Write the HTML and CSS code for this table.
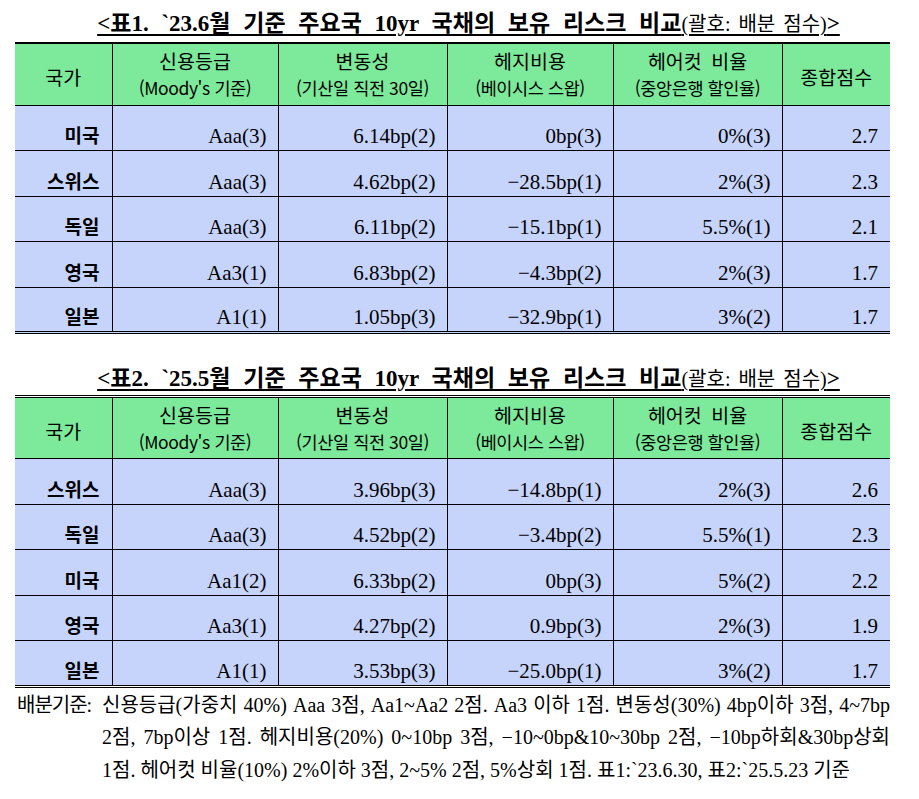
FILE: index.html
```html
<!DOCTYPE html>
<html lang="ko">
<head>
<meta charset="utf-8">
<link rel="stylesheet" href="styles.css">
</head>
<body>
<div class="page">
  <h2 class="title t1"><span class="u"><b>&lt;표1. `23.6월 기준 주요국 10yr 국채의 보유 리스크 비교</b><span class="paren">(괄호: 배분 점수)</span><b>&gt;</b></span></h2>
  <table class="risk first">
    <colgroup><col class="c1"><col class="c2"><col class="c3"><col class="c4"><col class="c5"><col class="c6"></colgroup>
    <thead>
      <tr>
        <th><span class="main">국가</span></th>
        <th><span class="main">신용등급</span><span class="sub">(Moody's 기준)</span></th>
        <th><span class="main">변동성</span><span class="sub">(기산일 직전 30일)</span></th>
        <th><span class="main">헤지비용</span><span class="sub">(베이시스 스왑)</span></th>
        <th><span class="main">헤어컷 비율</span><span class="sub">(중앙은행 할인율)</span></th>
        <th><span class="main">종합점수</span></th>
      </tr>
    </thead>
    <tbody>
      <tr><td class="ctry">미국</td><td>Aaa(3)</td><td>6.14bp(2)</td><td>0bp(3)</td><td>0%(3)</td><td class="score">2.7</td></tr>
      <tr><td class="ctry">스위스</td><td>Aaa(3)</td><td>4.62bp(2)</td><td>−28.5bp(1)</td><td>2%(3)</td><td class="score">2.3</td></tr>
      <tr><td class="ctry">독일</td><td>Aaa(3)</td><td>6.11bp(2)</td><td>−15.1bp(1)</td><td>5.5%(1)</td><td class="score">2.1</td></tr>
      <tr><td class="ctry">영국</td><td>Aa3(1)</td><td>6.83bp(2)</td><td>−4.3bp(2)</td><td>2%(3)</td><td class="score">1.7</td></tr>
      <tr><td class="ctry">일본</td><td>A1(1)</td><td>1.05bp(3)</td><td>−32.9bp(1)</td><td>3%(2)</td><td class="score">1.7</td></tr>
    </tbody>
  </table>

  <h2 class="title t2"><span class="u"><b>&lt;표2. `25.5월 기준 주요국 10yr 국채의 보유 리스크 비교</b><span class="paren">(괄호: 배분 점수)</span><b>&gt;</b></span></h2>
  <table class="risk second">
    <colgroup><col class="c1"><col class="c2"><col class="c3"><col class="c4"><col class="c5"><col class="c6"></colgroup>
    <thead>
      <tr>
        <th><span class="main">국가</span></th>
        <th><span class="main">신용등급</span><span class="sub">(Moody's 기준)</span></th>
        <th><span class="main">변동성</span><span class="sub">(기산일 직전 30일)</span></th>
        <th><span class="main">헤지비용</span><span class="sub">(베이시스 스왑)</span></th>
        <th><span class="main">헤어컷 비율</span><span class="sub">(중앙은행 할인율)</span></th>
        <th><span class="main">종합점수</span></th>
      </tr>
    </thead>
    <tbody>
      <tr><td class="ctry">스위스</td><td>Aaa(3)</td><td>3.96bp(3)</td><td>−14.8bp(1)</td><td>2%(3)</td><td class="score">2.6</td></tr>
      <tr><td class="ctry">독일</td><td>Aaa(3)</td><td>4.52bp(2)</td><td>−3.4bp(2)</td><td>5.5%(1)</td><td class="score">2.3</td></tr>
      <tr><td class="ctry">미국</td><td>Aa1(2)</td><td>6.33bp(2)</td><td>0bp(3)</td><td>5%(2)</td><td class="score">2.2</td></tr>
      <tr><td class="ctry">영국</td><td>Aa3(1)</td><td>4.27bp(2)</td><td>0.9bp(3)</td><td>2%(3)</td><td class="score">1.9</td></tr>
      <tr><td class="ctry">일본</td><td>A1(1)</td><td>3.53bp(3)</td><td>−25.0bp(1)</td><td>3%(2)</td><td class="score">1.7</td></tr>
    </tbody>
  </table>

  <div class="note">
    <div class="label">배분기준:</div>
    <div class="lines">
      <div class="line just">신용등급(가중치 40%) Aaa 3점, Aa1~Aa2 2점. Aa3 이하 1점. 변동성(30%) 4bp이하 3점, 4~7bp</div>
      <div class="line just">2점, 7bp이상 1점. 헤지비용(20%) 0~10bp 3점, −10~0bp&amp;10~30bp 2점, −10bp하회&amp;30bp상회</div>
      <div class="line">1점. 헤어컷 비율(10%) 2%이하 3점, 2~5% 2점, 5%상회 1점. 표1:`23.6.30, 표2:`25.5.23 기준</div>
    </div>
  </div>
</div>
</body>
</html>
```

FILE: styles.css
```css
* { box-sizing: border-box; }
html, body { margin: 0; padding: 0; background: #ffffff; }
body { font-family: "Liberation Serif", "Noto Sans CJK KR", serif; color: #000; }

.page { width: 919px; padding: 0 0 0 15px; }

.title {
  margin: 0;
  font-size: 23px;
  line-height: 28px;
  font-weight: normal;
  text-align: center;
  width: 875px;
  padding-left: 32px;
  word-spacing: 7px;
  white-space: nowrap;
}
.title b { font-weight: bold; }
.title .u {
  text-decoration: underline;
  text-decoration-thickness: 2px;
  text-underline-offset: 3px;
}
.title .paren { font-size: 20px; word-spacing: 3px; }
.t1 { padding-top: 10px; height: 42px; }
.t2 { margin-top: 28px; height: 33px; padding-top: 3px; }

.risk {
  border-collapse: collapse;
  table-layout: fixed;
  width: 875px;
}
.risk col.c1 { width: 97px; }
.risk col.c2 { width: 166px; }
.risk col.c3 { width: 169px; }
.risk col.c4 { width: 166px; }
.risk col.c5 { width: 169px; }
.risk col.c6 { width: 108px; }

.risk.first { border-top: 2px solid #000; }
.risk.second { border-top: 3px double #000; }
.risk { border-bottom: 3px double #000; }

.risk th {
  background: #7de99a;
  font-family: "Noto Sans CJK KR", "Noto Sans", sans-serif;
  font-weight: normal;
  height: 62px;
  padding: 0;
  border-left: 1px solid #000;
  border-bottom: 1px solid #000;
  text-align: center;
  vertical-align: middle;
}
.risk th:first-child { border-left: none; }
.risk th .main { display: block; font-size: 19.5px; line-height: 24px; word-spacing: 4px; }
.risk th .sub { display: block; font-size: 17.5px; line-height: 24px; margin-top: 3px; letter-spacing: -0.4px; }
.risk th .main:only-child { padding-top: 5px; }

.risk td {
  background: #c6d4fc;
  height: 45.5px;
  padding: 0 11px 2px 0;
  border-left: 1px solid #000;
  border-top: 1px solid #000;
  text-align: right;
  vertical-align: bottom;
  font-size: 21px;
  line-height: 24px;
  white-space: nowrap;
}
.risk tbody tr:first-child td { border-top: none; }
.risk td:first-child { border-left: none; }
.risk td.ctry {
  font-family: "Noto Sans CJK KR", sans-serif;
  font-weight: bold;
  font-size: 19px;
  padding-right: 12px;
  padding-bottom: 3px;
}
.risk td.score { padding-right: 12px; }

.note {
  display: grid;
  grid-template-columns: 87px 788px;
  width: 875px;
  margin-top: 1px;
  font-size: 20px;
  line-height: 32.5px;
}
.note .label { padding-left: 2px; white-space: nowrap; letter-spacing: -1px; }
.note .line { white-space: nowrap; }
.note .just { text-align: justify; text-align-last: justify; }
```
